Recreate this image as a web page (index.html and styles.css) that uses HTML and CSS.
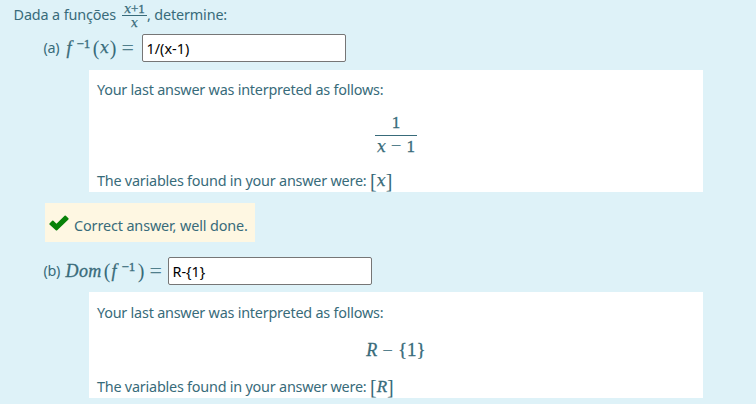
FILE: index.html
```html
<!DOCTYPE html>
<html lang="pt">
<head>
<meta charset="utf-8">
<title>Funções</title>
<link rel="stylesheet" href="styles.css">
</head>
<body>
<main class="question">
  <p class="intro"><span class="intro-lead">Dada a funções</span><span class="fraction small"><span class="num"><i class="x">x</i>+1</span><span class="den"><i class="x">x</i></span></span><span class="intro-tail">, determine:</span></p>

  <div class="part part-a">
    <span class="label">(a)</span>
    <span class="math formula-a"><i class="fn">f</i><sup>−1</sup><span class="paren">(</span><i class="x">x</i><span class="paren">)</span><span class="eq">=</span></span>
    <input type="text" value="1/(x-1)" aria-label="a">
  </div>
  <section class="validation validation-a">
    <p><span class="sentence-a">Your last answer was interpreted as follows:</span></p>
    <div class="display math"><span class="fraction large"><span class="num">1</span><span class="den"><i class="x">x</i><span class="minus">−</span>1</span></span></div>
    <p><span class="sentence-b">The variables found in your answer were:</span><span class="math bracket"><b>[</b><i class="x">x</i><b>]</b></span></p>
  </section>

  <div class="feedback">
    <svg class="check" viewBox="0 0 20 16" aria-hidden="true"><path d="M.5 8.4 3.2 5.7Q3.8 5.2 4.4 5.7L7.5 8.8 15.6.7Q16.2.2 16.8.7L19.4 3.3Q20 3.9 19.4 4.5L8.2 15.2Q7.5 15.7 6.8 15.2L.5 9.4Q0 8.9.5 8.4Z"/></svg>
    <span class="feedback-text">Correct answer, well done.</span>
  </div>

  <div class="part part-b">
    <span class="label">(b)</span>
    <span class="math formula-b"><i class="dom">Dom</i><span class="paren">(</span><i class="fn">f</i><sup>−1</sup><span class="paren">)</span><span class="eq">=</span></span>
    <input type="text" value="R-{1}" aria-label="b">
  </div>
  <section class="validation validation-b">
    <p><span class="sentence-a">Your last answer was interpreted as follows:</span></p>
    <div class="display math"><i>R</i><span class="minus">−</span><span class="set">{1}</span></div>
    <p><span class="sentence-b">The variables found in your answer were:</span><span class="math bracket"><b>[</b><i>R</i><b>]</b></span></p>
  </section>
</main>
</body>
</html>
```
FILE: styles.css
```css
* { box-sizing: border-box; }
body {
  margin: 0;
  height: 404px;
  overflow: hidden;
  background: #def2f8;
  color: #386b7a;
  font: 14.4px/22px "Noto Sans", sans-serif;
}
p { margin: 0; }
.question { display: flex; flex-direction: column; align-items: flex-start; white-space: nowrap; }
.intro { display: flex; align-items: center; height: 30px; padding-left: 13.5px; letter-spacing: -.13px; }
.intro-lead { width: 108.5px; }
.intro-tail { letter-spacing: -.15px; }
.math, .fraction { font-family: "Liberation Serif", serif; letter-spacing: 0; -webkit-text-stroke: .3px; }
.x { font-family: "DejaVu Serif", serif; font-size: .93em; line-height: 1; -webkit-text-stroke: .25px; }
.fraction { display: inline-flex; flex-direction: column; align-items: center; }
.fraction .num { border-bottom: 1px solid #386b7a; width: 100%; text-align: center; }
.small { width: 25px; font-size: 13px; line-height: 12px; }
.small .num { height: 13px; line-height: 12px; }
.small .den { height: 11px; line-height: 13px; }
.part { display: flex; align-items: center; height: 28px; padding-left: 43.5px; }
.part-a { margin-top: 4px; }
.label { width: 22px; letter-spacing: -.3px; }
.math { font-size: 17px; }
.part .math { display: flex; align-items: center; height: 28px; }
.formula-a { width: 76px; }
.formula-b { width: 102px; }
.fn { width: 11px; padding-left: 1px; font-size: 18px; }
.dom { width: 38px; font-size: 18px; letter-spacing: .4px; }
sup { width: 16px; font-size: 13px; line-height: 14px; padding-bottom: 9px; }
.paren { width: 7px; font-size: 20px; text-align: center; -webkit-text-stroke: 0; }
.formula-a .x { width: 10px; text-align: center; }
.eq { margin-left: 5px; font-size: 22px; line-height: 20px; -webkit-text-stroke: 0; opacity: .85; }
input {
  width: 204.5px;
  height: 28px;
  margin: 0;
  padding: 1px 4px;
  border: 1px solid #767676;
  border-radius: 2px;
  background: #fff;
  color: #000;
  font: 14.4px "Noto Sans", sans-serif;
  letter-spacing: 0;
}
.validation { width: 614px; margin-left: 89px; padding: 9px 8px 0; background: #fff; }
.validation p { display: flex; align-items: center; height: 22px; }
.validation-a { height: 122px; margin-top: 8px; }
.validation-b { height: 106px; margin-top: 7px; padding-top: 10px; }
.display { display: flex; align-items: center; justify-content: center; }
.validation-a .display { height: 69px; }
.validation-b .display { height: 52px; }
.large { width: 42px; line-height: 22px; }
.large .num { height: 24px; }
.large .den { height: 24px; }
.minus { margin: 0 5px; font-size: 19px; line-height: 1; -webkit-text-stroke: 0; opacity: .85; }
.validation-b .display i { font-size: 18px; }
.set { font-size: 19px; }
.sentence-a { letter-spacing: -.22px; }
.sentence-b { width: 273px; letter-spacing: -.22px; }
.bracket { display: flex; align-items: center; height: 22px; }
.bracket b { font-size: 20px; font-weight: 400; line-height: 20px; -webkit-text-stroke: 0; }
.bracket .x { width: 9px; text-align: center; }
.feedback { display: flex; align-items: center; width: 210px; height: 39px; margin: 11px 0 0 45px; padding: 7px 5px 0 4px; background: #fef7e2; }
.check { width: 20px; height: 16px; margin: -6px 5px 0 0; fill: #088208; }
.feedback-text { letter-spacing: -.12px; }
.part-b { margin-top: 15px; }
```
